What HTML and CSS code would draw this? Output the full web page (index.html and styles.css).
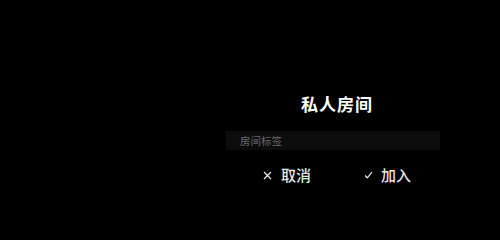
FILE: index.html
```html
<!DOCTYPE html>
<html lang="zh">
<head>
<meta charset="utf-8">
<link rel="stylesheet" href="styles.css">
</head>
<body>
<div class="page">
  <div class="dialog">
    <h1 class="title">私人房间</h1>
    <div class="field"><span class="placeholder">房间标签</span></div>
    <div class="actions">
      <div class="btn">
        <svg class="icon" width="9" height="9" viewBox="0 0 9 9"><path d="M1 1 L8 8 M8 1 L1 8" stroke="#e6e6e6" stroke-width="1.3" fill="none"/></svg>
        <span>取消</span>
      </div>
      <div class="btn btn-ok">
        <svg class="icon" width="9" height="8" viewBox="0 0 9 8"><path d="M1 4.5 L3.3 6.8 L8 1.2" stroke="#e6e6e6" stroke-width="1.3" fill="none"/></svg>
        <span>加入</span>
      </div>
    </div>
  </div>
</div>
</body>
</html>
```
FILE: styles.css
```css
html, body {
  margin: 0;
  padding: 0;
  background: #000;
}
body {
  width: 500px;
  height: 225px;
  overflow: hidden;
  font-family: "Noto Sans CJK SC", "Noto Sans", sans-serif;
}
.page {
  padding: 94px 0 0 226px;
}
.dialog {
  width: 222px;
  display: flex;
  flex-direction: column;
}
.title {
  margin: 0;
  font-size: 17px;
  line-height: 20px;
  font-weight: 700;
  color: #fff;
  text-align: center;
  letter-spacing: 1px;
}
.field {
  margin-top: 17px;
  width: 214px;
  height: 19px;
  background: #0c0c0c;
  display: flex;
  align-items: center;
  padding-left: 14px;
  box-sizing: border-box;
}
.placeholder {
  font-size: 10.5px;
  color: #6a6a6a;
}
.actions {
  margin-top: 15px;
  display: flex;
  justify-content: center;
  gap: 53px;
}
.btn {
  display: flex;
  align-items: center;
  gap: 9px;
  color: #e6e6e6;
  font-size: 15px;
  line-height: 20px;
  font-weight: 500;
}
.btn-ok {
  gap: 8px;
}
.icon {
  display: block;
}
```
